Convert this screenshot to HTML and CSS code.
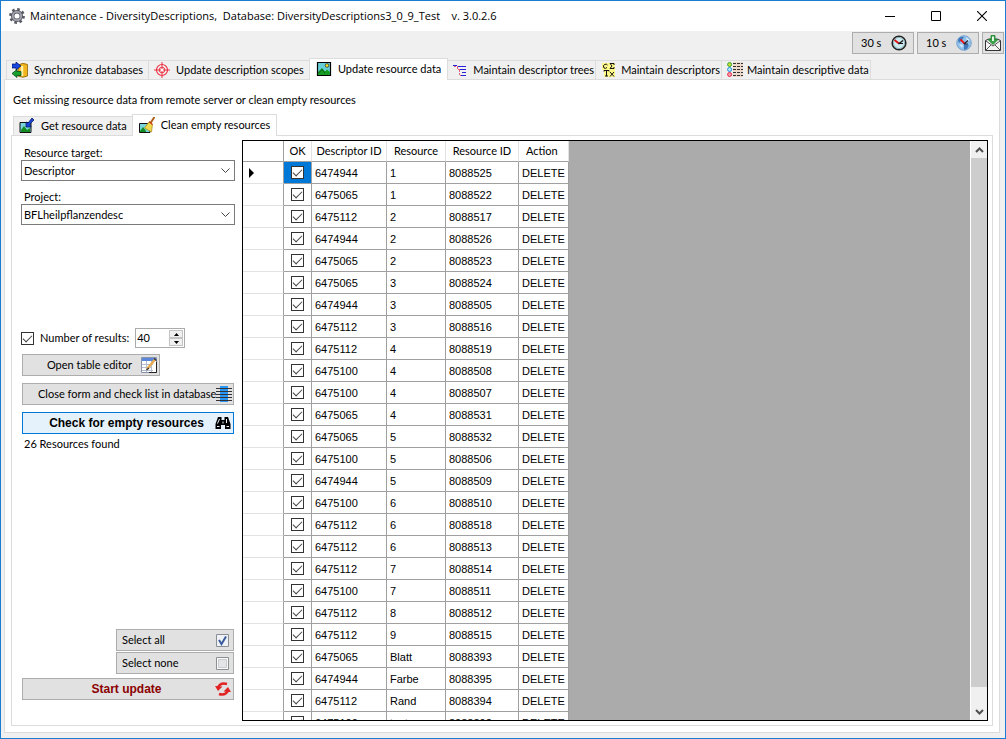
FILE: index.html
```html
<!DOCTYPE html>
<html lang="en">
<head>
<meta charset="utf-8">
<title>Maintenance - DiversityDescriptions</title>
<link rel="stylesheet" href="styles.css">
</head>
<body>
<div class="window">
  <header class="titlebar">
    <svg class="gear" width="16" height="16" viewBox="0 0 16 16"><circle cx="8" cy="8" r="6.6" fill="none" stroke="#5a5a64" stroke-width="2.6" stroke-dasharray="2.6 2.58"/><circle cx="8" cy="8" r="4.3" fill="none" stroke="#4c4c56" stroke-width="3.4"/><circle cx="8" cy="8" r="4.2" fill="none" stroke="#a2a2ae" stroke-width="2"/></svg>
    <h1 class="title">Maintenance - DiversityDescriptions,&nbsp; Database: DiversityDescriptions3_0_9_Test &nbsp;&nbsp; v. 3.0.2.6</h1>
    <div class="window-buttons">
      <button class="window-button" aria-label="Minimize"><svg width="10" height="10"><path d="M0 5.5H10" stroke="#000"/></svg></button>
      <button class="window-button" aria-label="Maximize"><svg width="10" height="10"><path d="M.5.5H9.5V9.5H.5Z" fill="none" stroke="#000"/></svg></button>
      <button class="window-button" aria-label="Close"><svg width="10" height="10"><path d="M0 0L10 10M10 0L0 10" stroke="#000" stroke-width="1.1"/></svg></button>
    </div>
  </header>
  <div class="toolbar">
    <button class="button tool">30 s
      <svg width="16" height="16" viewBox="0 0 16 16"><circle cx="8" cy="8" r="6.8" fill="#cdeaf0" stroke="#222" stroke-width="1.6"/><circle cx="8" cy="8" r="5.6" fill="none" stroke="#8fb3bb"/><path d="M3.5 5L8 8.5" stroke="#e01010" stroke-width="1.8"/><path d="M7.5 9L12 5.5M8 8.5H12" stroke="#111" stroke-width="1.2"/></svg></button>
    <button class="button tool">10 s
      <svg width="16" height="16" viewBox="0 0 16 16"><circle cx="8" cy="8" r="7.3" fill="#8fc0ea" stroke="#7ba4cf"/><path d="M2 5Q4 1 8 2L6 5 3 8ZM8 9L13 10 11 14 8 15Z" fill="#3f78bd"/><path d="M10 2L14 5 11 7ZM3 9L7 10 6 13Z" fill="#d5ecff"/><path d="M4.5 4.5L8.5 8.5" stroke="#f01515" stroke-width="1.8"/><path d="M8 9L12 5.5M8 9h4" stroke="#223" stroke-width="1.2"/></svg></button>
    <button class="button tool mail" aria-label="Feedback"><svg width="16" height="16" viewBox="0 0 16 16"><path d="M.5 5.5V15.500H15.5V5.5L12 4H4Z" fill="#f4f4f4" stroke="#333"/><path d="M1 6L8 11 15 6M1 15L6 10M15 15L10 10" fill="none" stroke="#555"/><path d="M6 .500H10V4.500H13L8 9.500 3 4.500H6Z" fill="#37a447" stroke="#1c7f2c" stroke-width=".8"/><path d="M8 1.500V6" stroke="#e6f8e6" stroke-width="2"/></svg></button>
  </div>
  <div class="outer-tabs tabs" role="tablist">
    <button class="tab" role="tab"><svg width="16" height="16" viewBox="0 0 16 16"><path d="M6 3Q11 0 15.500 2.500V14Q11 16.500 6 14Z" fill="#f2b51d" stroke="#7a5200" stroke-width=".7"/><path d="M10 4V14" stroke="#fff1a8" stroke-width="2.500"/><path d="M0 2H4V0L9 4 4 8V6H0Z" fill="#1746e0" stroke="#001060" stroke-width=".7"/><path d="M9 9.500H5V7.500L0 11.500 5 15.500V13.500H9Z" fill="#17a02c" stroke="#003a08" stroke-width=".7"/></svg>Synchronize databases</button>
    <button class="tab" role="tab"><svg width="16" height="16" viewBox="0 0 16 16" fill="none" stroke="#ee3344"><circle cx="8" cy="8" r="5.500" stroke-width="1.200"/><circle cx="8" cy="8" r="2.800"/><path d="M8 0V16M0 8H16"/><path d="M7 7h2v2H7z" fill="#fff" stroke="none"/></svg>Update description scopes</button>
    <button class="tab selected" role="tab" aria-selected="true"><svg width="16" height="16" viewBox="0 0 16 16"><path d="M1.500 1.500H14.500V14.500H1.500Z" fill="#67cfd8" stroke="#000" stroke-width="1.2"/><path d="M2 11L6 7 9 10.500 11 8.500 14 11V14H2Z" fill="#159a22"/><path d="M2 12.500L6 8.500 9 12" fill="none" stroke="#0a5c12"/><circle cx="11" cy="4.500" r="1.800" fill="#f4e51c" stroke="#333" stroke-width=".8"/></svg>Update resource data</button>
    <button class="tab" role="tab"><svg width="16" height="16" viewBox="0 0 16 16" fill="none"><path d="M1 4.500H8M4.500 5V7.500H8M6.500 8V13.500H9" stroke="#e06080" stroke-dasharray="2 1"/><path d="M0 3.500H4M5 4.500H13M7 7.500H13M9 10.500H13M8 13.500H13" stroke="#2a22d8" stroke-width="1.200"/></svg>Maintain descriptor trees</button>
    <button class="tab" role="tab"><svg width="16" height="16" viewBox="0 0 16 16"><path d="M1 1H14V15H3V8H1Z" fill="#fff88a"/><path d="M6.500 3Q5.500 1.500 3.500 2.500T3 6Q4.500 7 6 5.500M13 3V1.500H9L11 4 9 6.500H13V5M3 9.500V8.500H8V9.500M5.500 9V14M4 14H7M9 10L13 14.500M13 10L9 14.500" fill="none" stroke="#111"/></svg>Maintain descriptors</button>
    <button class="tab" role="tab"><svg width="16" height="16" viewBox="0 0 16 16"><path d="M6 0H16V15H6Z" fill="#edd9cc"/><path d="M6 1.500H16M6 4.500H16M6 7.500H16M6 10.500H16M6 13.500H16" stroke="#333" stroke-dasharray="3 1"/><circle cx="2.600" cy="2.500" r="2" fill="#ccdd35" stroke="#31a431"/><circle cx="2.600" cy="7.500" r="2" fill="#bfeafa" stroke="#1b8cd6"/><circle cx="2.600" cy="12.500" r="2" fill="#ff9cae" stroke="#e02b43"/></svg>Maintain descriptive data</button>
  </div>
  <main class="page">
    <p class="hint">Get missing resource data from remote server or clean empty resources</p>
    <div class="tabs inner-tabs" role="tablist">
      <button class="tab" role="tab"><svg width="16" height="16" viewBox="0 0 16 16"><path d="M1 4.500H12V14.500H1Z" fill="#7ad4dc" stroke="#111"/><path d="M2 12L5 8 8 12 11 10V14H2Z" fill="#148c20"/><path d="M7 4L9 5 13 0 15 2 11 6 12 9H7Z" fill="#1745dc" stroke="#00104d" stroke-width=".7"/></svg>Get resource data</button>
      <button class="tab selected" role="tab" aria-selected="true"><svg width="16" height="16" viewBox="0 0 16 16"><path d="M.500 6.500H11V15.500H.500Z" fill="#7ad4dc" stroke="#111"/><path d="M1 14L4 10 7 14V15H1Z" fill="#148c20"/><path d="M15.500 0L11.500 6" stroke="#b2601c" stroke-width="2"/><path d="M10 5L13.500 7.500 12.500 15 5.500 11Z" fill="#f0d84e" stroke="#a98a10" stroke-width=".7"/><path d="M10 4.500L13.500 7.500" stroke="#c83c1a" stroke-width="1.200"/></svg>Clean empty resources</button>
    </div>
    <section class="panel">
      <form class="side">
        <label class="field-label" for="target">Resource target:</label>
        <div class="combo"><select id="target"><option>Descriptor</option></select><svg width="9" height="5"><path d="M.5.500L4.500 4.500 8.500.500" fill="none" stroke="#444"/></svg></div>
        <label class="field-label second" for="project">Project:</label>
        <div class="combo"><select id="project"><option>BFLheilpflanzendesc</option></select><svg width="9" height="5"><path d="M.5.500L4.500 4.500 8.500.500" fill="none" stroke="#444"/></svg></div>
        <div class="results">
          <input class="check" type="checkbox" id="limit" checked>
          <label for="limit">Number of results:</label>
          <div class="spinner">
            <input type="text" inputmode="numeric" value="40" aria-label="Number of results">
            <div class="spin-buttons">
              <button type="button" aria-label="Increase"><svg width="5" height="3"><path d="M0 3L2.500 0 5 3Z"/></svg></button>
              <button type="button" aria-label="Decrease"><svg width="5" height="3"><path d="M0 0L2.500 3 5 0Z"/></svg></button>
            </div>
          </div>
        </div>
        <button type="button" class="button action editor"><span>Open table editor</span><svg width="16" height="16" viewBox="0 0 16 16"><path d="M.500.500H15.500V15.500H.500Z" fill="#fff" stroke="#8a94a8"/><path d="M1 1H15V4H1Z" fill="#5a86dc"/><path d="M1 7.500H12M1 10.500H10M1 13.500H12M5.500 4V15M10.500 4V15" stroke="#b3bcd0"/><path d="M6 12L14 2.500" stroke="#e8ad52" stroke-width="2.600"/><path d="M5.500 13L8 11M13 1.500L15.500 3.500" stroke="#333" stroke-width="1.200"/><path d="M15.500 5V15.500H8" fill="none" stroke="#222"/></svg></button>
        <button type="button" class="button action"><span>Close form and check list in database</span><svg width="16" height="16" viewBox="0 0 16 16"><path d="M4 0H12V16H4Z" fill="#2997f5"/><path d="M0 2.500H16M0 5.500H16M0 8.500H16M0 11.500H16M0 14.500H16" stroke="#333"/></svg></button>
        <button type="button" class="button action primary"><span>Check for empty resources</span><svg width="16" height="16" viewBox="0 0 16 16"><path d="M3 2H6.500V5H9.500V2H13L15.500 9V14H10V10H6V14H.500V9Z" fill="#000"/><path d="M4.500 4L2.500 8.500M11.500 4V8M2 11.500H4.500M11.500 11.500H14M8 6.500V8.500" stroke="#e4f4fc" stroke-width="1"/></svg></button>
        <p class="found">26 Resources found</p>
        <div class="bottom">
          <button type="button" class="button pick"><span>Select all</span><svg width="13" height="13" viewBox="0 0 13 13"><path d="M.500.500H12.500V12.500H.500Z" fill="#eef1f5" stroke="#8a8f94"/><path d="M3 6L5.500 10 10 2.500" fill="none" stroke="#3b5c9c" stroke-width="2"/></svg></button>
          <button type="button" class="button pick"><span>Select none</span><svg width="13" height="13" viewBox="0 0 13 13"><path d="M.500.500H12.500V12.500H.500Z" fill="#fafafa" stroke="#8a8f94"/><path d="M2.500 2.500H10.500V10.500H2.500Z" fill="#e3e5e8" stroke="#ccc"/></svg></button>
          <button type="button" class="button action start"><span>Start update</span><svg width="16" height="16" viewBox="0 0 16 16"><path d="M3 6.500Q5.500 1 12 3" fill="none" stroke="#e22222" stroke-width="2.600"/><path d="M0 5L7.500 5.500 3 10Z" fill="#e22222"/><path d="M13 9.500Q10.500 15 4 13" fill="none" stroke="#e22222" stroke-width="2.600"/><path d="M16 11L8.500 10.500 13 6Z" fill="#e22222"/></svg></button>
        </div>
      </form>
      <div class="grid">
        <div class="rows">
          <table>
            <colgroup><col class="c-head"><col class="c-ok"><col class="c-desc"><col class="c-res"><col class="c-id"><col class="c-act"></colgroup>
            <thead><tr><th></th><th>OK</th><th>Descriptor ID</th><th>Resource</th><th>Resource ID</th><th class="left">Action</th></tr></thead>
            <tbody id="rows"></tbody>
          </table>
        </div>
        <div class="scrollbar">
          <button aria-label="Scroll up"><svg width="9" height="6"><path d="M1 5L4.500 1.500 8 5" fill="none" stroke="#505050" stroke-width="2"/></svg></button>
          <div class="track"><div class="thumb"></div></div>
          <button aria-label="Scroll down"><svg width="9" height="6"><path d="M1 1L4.500 4.500 8 1" fill="none" stroke="#505050" stroke-width="2"/></svg></button>
        </div>
      </div>
    </section>
  </main>
</div>
<script src="rows.js"></script>
</body>
</html>
```
FILE: styles.css
```css
* { box-sizing: border-box; }
body { margin: 0; font: 11px/14px Lato, "Liberation Sans", Arial, sans-serif; color: #000; }
button, input, select { font: inherit; color: inherit; margin: 0; }
button { padding: 0; border: 0; background: none; }
p, h1 { margin: 0; }
svg { flex: none; display: block; }

.window { height: 100vh; min-height: 500px; display: flex; flex-direction: column; border: 1px solid #1a7dd2; background: #f0f0f0; }
.titlebar { display: flex; align-items: center; height: 30px; padding-left: 8px; gap: 5px; background: #fff; flex: none; }
.title { font: 11px/16px "Open Sans", "Noto Sans", sans-serif; white-space: nowrap; flex: 1; }
.window-buttons { display: flex; }
.window-button { width: 46px; height: 30px; display: grid; place-items: center; }

.toolbar { display: flex; justify-content: flex-end; gap: 3px; padding: 1px 1px 0; height: 27px; flex: none; }
.button { border: 1px solid #adadad; background: #e1e1e1; height: 22px; display: flex; align-items: center; }
.tool { width: 62px; justify-content: space-between; padding: 0 6px 0 8px; }
.mail { width: 22px; padding: 0; justify-content: center; }

.tabs { display: flex; align-items: flex-end; flex: none; position: relative; z-index: 1; height: 22px; }
.outer-tabs { padding-left: 5px; }
.tab { display: flex; align-items: center; gap: 6px; height: 19px; padding: 0 5px; margin-bottom: 1px; border: 1px solid #dcdcdc; border-bottom: 0; background: #f0f0f0; white-space: nowrap; }
.tab + .tab { border-left: 0; }
.tab.selected { height: 22px; margin-bottom: 0; padding: 0 6px 2px; background: #fff; border-left: 1px solid #dcdcdc; margin-left: -1px; }
.selected ~ .tab { gap: 4px; padding-right: 1px; }

.page { flex: 1; min-height: 0; display: flex; flex-direction: column; margin: -1px 5px 5px 3px; padding: 13px 6px 6px; background: #fff; border: 1px solid #dcdcdc; }
.hint { padding-left: 2px; }
.inner-tabs { margin-top: 7px; padding-left: 2px; }
.panel { flex: 1; min-height: 0; display: flex; gap: 7px; margin-top: -1px; padding: 4px; border: 1px solid #dcdcdc; }

.side { width: 219px; flex: none; display: flex; flex-direction: column; padding: 6px 0 21px 5px; }
.field-label { padding-left: 3px; }
.second { margin-top: 9px; }
.combo { display: grid; align-items: center; }
.combo select, .combo svg { grid-area: 1 / 1; }
.combo select { appearance: none; width: 100%; height: 21px; padding: 0 2px; border: 1px solid #7a7a7a; border-radius: 0; background: #fff; }
.combo svg { justify-self: end; margin-right: 5px; pointer-events: none; }
.results { display: flex; align-items: center; gap: 6px; margin-top: 103px; }
.check { appearance: none; width: 13px; height: 13px; border: 1px solid #333; background: #fff; display: grid; place-items: center; flex: none; }
.check:checked::after { content: ""; width: 8px; height: 4px; border: solid #444; border-width: 0 0 1px 1px; transform: translateY(-1px) rotate(-45deg); }
.spinner { display: flex; width: 50px; height: 20px; border: 1px solid #ababab; padding: 1px; }
.spinner input { flex: 1; min-width: 0; border: 0; padding: 0; background: #fff; }
.spin-buttons { display: flex; flex-direction: column; width: 14px; }
.spin-buttons button { flex: 1; display: grid; place-items: center; border: 1px solid #c4c4c4; background: #f0f0f0; }

.action { margin: 7px 1px 0; padding: 0 2px 0 15px; flex: none; height: 22px; }
.action span { flex: 1; text-align: center; white-space: nowrap; }
.editor { width: 138px; margin-top: 6px; }
.primary { border-color: #0078d7; background: #e5f1fb; }
.primary, .start { font: bold 12px/14px "Liberation Sans", Arial, sans-serif; }
.found { padding: 3px 0 0 3px; }
.bottom { margin-top: auto; display: flex; flex-direction: column; align-items: flex-end; gap: 1px; }
.pick { width: 118px; margin-right: 1px; padding: 0 4px 0 5px; justify-content: space-between; }
.start { align-self: stretch; margin-top: 3px; color: #8b0000; }

.grid { flex: 1; min-width: 0; display: flex; border: 1px solid #000; background: #ababab; }
.rows { flex: 1; min-width: 0; overflow: hidden; }
table { border-collapse: separate; border-spacing: 0; table-layout: fixed; width: 326px; background: #fff; }
tbody { font-family: "Liberation Sans", Arial, sans-serif; }
.c-head { width: 41px; }
.c-ok { width: 28px; }
.c-desc { width: 75px; }
.c-res { width: 59px; }
.c-id { width: 73px; }
.c-act { width: 50px; }
th, td { height: 22px; padding: 0 3px; border-right: 1px solid #a0a0a0; border-bottom: 1px solid #a0a0a0; text-align: left; white-space: nowrap; }
th { height: 21px; font-weight: normal; border-right-color: #e2e2e2; text-align: center; }
th:first-child { border-right-color: #a0a0a0; }
th.left { text-align: left; padding-left: 7px; }
td:first-child { border-bottom-color: #e2e2e2; padding-left: 6px; }
td .check { margin: 0 auto; }
td.ok { padding: 0; }
td.current { background: #0078d7; }
.scrollbar { width: 17px; display: flex; flex-direction: column; background: #f0f0f0; border-left: 1px solid #fff; }
.scrollbar button { height: 17px; display: grid; place-items: center; }
.track { flex: 1; }
.thumb { height: 97%; background: #cdcdcd; }
```
FILE: rows.js
```js
const records = [
  ["6474944", "1", "8088525"], ["6475065", "1", "8088522"], ["6475112", "2", "8088517"],
  ["6474944", "2", "8088526"], ["6475065", "2", "8088523"], ["6475065", "3", "8088524"],
  ["6474944", "3", "8088505"], ["6475112", "3", "8088516"], ["6475112", "4", "8088519"],
  ["6475100", "4", "8088508"], ["6475100", "4", "8088507"], ["6475065", "4", "8088531"],
  ["6475065", "5", "8088532"], ["6475100", "5", "8088506"], ["6474944", "5", "8088509"],
  ["6475100", "6", "8088510"], ["6475112", "6", "8088518"], ["6475112", "6", "8088513"],
  ["6475112", "7", "8088514"], ["6475100", "7", "8088511"], ["6475112", "8", "8088512"],
  ["6475112", "9", "8088515"], ["6475065", "Blatt", "8088393"], ["6474944", "Farbe", "8088395"],
  ["6475112", "Rand", "8088394"], ["6475100", "textur", "8088392"]
];
const marker = '<svg width="5" height="10"><path d="M0 0L5 5 0 10Z"/></svg>';
document.getElementById("rows").innerHTML = records.map(([descriptor, resource, id], i) =>
  `<tr><td>${i ? "" : marker}</td><td class="ok${i ? "" : " current"}"><input class="check" type="checkbox" checked aria-label="Resource ${id}"></td><td>${descriptor}</td><td>${resource}</td><td>${id}</td><td>DELETE</td></tr>`
).join("");
```
